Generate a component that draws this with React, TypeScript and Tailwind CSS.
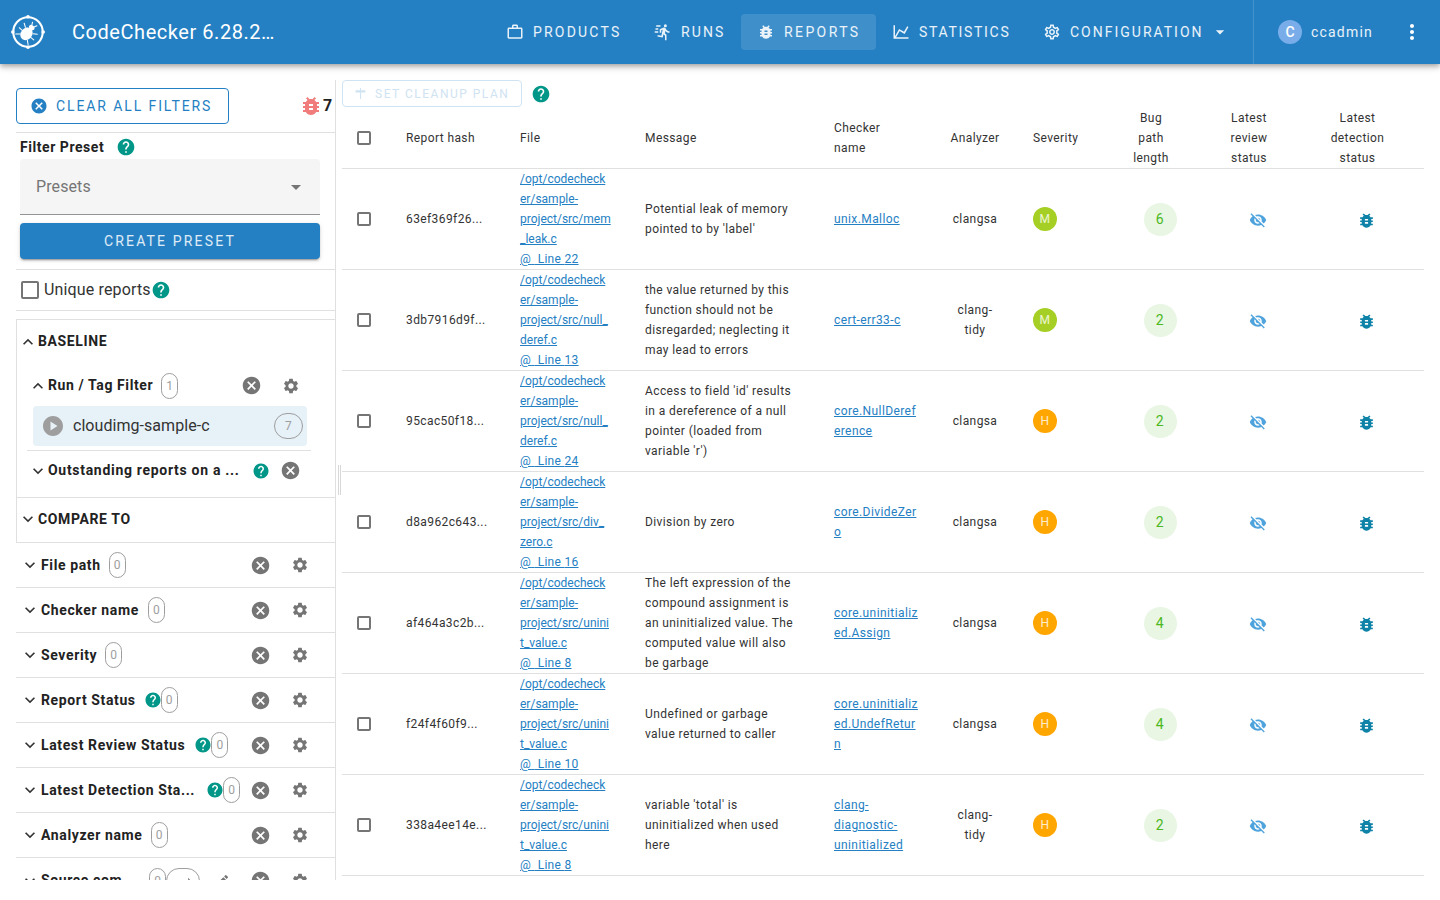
import React from 'react';
import {
  MdArrowDropDown,
  MdBugReport,
  MdCancel,
  MdEdit,
  MdExpandLess,
  MdExpandMore,
  MdHelp,
  MdMoreVert,
  MdOutlineSettings,
  MdPlayCircle,
  MdSettings,
  MdTrendingFlat,
  MdVisibilityOff,
} from 'react-icons/md';

const RUN_FAST =
  'M16.5,5.5A2,2 0 0,0 18.5,3.5A2,2 0 0,0 16.5,1.5A2,2 0 0,0 14.5,3.5A2,2 0 0,0 16.5,5.5M12.9,19.4L13.9,15L16,17V23H18V15.5L15.9,13.5L16.5,10.5C17.89,12.09 19.89,13 22,13V11C20.24,11.03 18.6,10.11 17.7,8.6L16.7,7C16.34,6.4 15.7,6 15,6C14.7,6 14.5,6.1 14.2,6.1L9,8.3V13H11V9.6L12.8,8.9L11.2,17L6.3,16L5.9,18L12.9,19.4M4,9A1,1 0 0,1 3,8A1,1 0 0,1 4,7H7V9H4M5,5A1,1 0 0,1 4,4A1,1 0 0,1 5,3H10V5H5M3,13A1,1 0 0,1 2,12A1,1 0 0,1 3,11H7V13H3Z';
const BRIEFCASE =
  'M20,6C20.58,6 21.05,6.2 21.42,6.59C21.8,7 22,7.45 22,8V19C22,19.55 21.8,20 21.42,20.41C21.05,20.8 20.58,21 20,21H4C3.42,21 2.95,20.8 2.58,20.41C2.2,20 2,19.55 2,19V8C2,7.45 2.2,7 2.58,6.59C2.95,6.2 3.42,6 4,6H8V4C8,3.42 8.2,2.95 8.58,2.58C8.95,2.2 9.42,2 10,2H14C14.58,2 15.05,2.2 15.42,2.58C15.8,2.95 16,3.42 16,4V6H20M4,8V19H20V8H4M14,6V4H10V6H14Z';
const CHART_LINE = 'M16,11.78L20.24,4.45L21.97,5.45L16.74,14.5L10.23,10.75L5.46,19H22V21H2V3H4V17.54L9.5,8L16,11.78Z';
const BUG =
  'M14,12H10V10H14M14,16H10V14H14M20,8H17.19C16.74,7.22 16.12,6.55 15.37,6.04L17,4.41L15.59,3L13.42,5.17C12.96,5.06 12.5,5 12,5C11.5,5 11.04,5.06 10.59,5.17L8.41,3L7,4.41L8.62,6.04C7.88,6.55 7.26,7.22 6.81,8H4V10H6.09C6.04,10.33 6,10.66 6,11V12H4V14H6V15C6,15.34 6.04,15.67 6.09,16H4V18H6.81C7.85,19.79 9.78,21 12,21C14.22,21 16.15,19.79 17.19,18H20V16H17.91C17.96,15.67 18,15.34 18,15V14H20V12H18V11C18,10.66 17.96,10.33 17.91,10H20V8Z';

function Mdi({ d, className }: { d: string; className?: string }) {
  return (
    <svg viewBox="0 0 24 24" className={className} fill="currentColor">
      <path d={d} />
    </svg>
  );
}

function Logo() {
  return (
    <svg viewBox="0 0 40 40" className="w-[38px] h-[38px]" fill="none">
      <circle cx="20" cy="20" r="15.5" stroke="white" strokeWidth="2.2" />
      <circle cx="20" cy="4" r="1.9" fill="white" />
      <circle cx="20" cy="36" r="1.9" fill="white" />
      <circle cx="4" cy="20" r="1.9" fill="white" />
      <circle cx="36" cy="20" r="1.9" fill="white" />
      {/* bug, head to the upper right */}
      <g transform="rotate(40 20 20)" stroke="white" strokeWidth="1.1" strokeLinecap="round">
        <ellipse cx="20" cy="22.5" rx="6" ry="7.2" fill="white" stroke="none" />
        <ellipse cx="20" cy="13.8" rx="3.2" ry="2.3" fill="white" stroke="none" />
        <path d="M18.5 12 L17 9 M21.5 12 L23 9" />
        <path d="M14.8 18 L11 15.5 M14.2 22.5 L10 22.5 M15 27 L11.5 30" />
        <path d="M25.2 18 L29 15.5 M25.8 22.5 L30 22.5 M25 27 L28.5 30" />
      </g>
    </svg>
  );
}

function NavButton({ label, icon, className, trailing }: { label: string; icon: React.ReactNode; className: string; trailing?: React.ReactNode }) {
  return (
    <div className={`h-9 shrink-0 flex items-center rounded text-[14px] text-white/90 ${className}`}>
      {icon}
      {label}
      {trailing}
    </div>
  );
}

function Header() {
  return (
    <header className="h-16 shrink-0 bg-[#2580c3] flex items-center text-white shadow-[0_2px_4px_-1px_rgba(0,0,0,0.2),0_4px_5px_0_rgba(0,0,0,0.14),0_1px_10px_0_rgba(0,0,0,0.12)] relative z-10">
      <div className="w-[491px] shrink-0 flex items-center pl-[9px]">
        <Logo />
        <span className="ml-[25px] text-[20px] tracking-[0.55px]">CodeChecker 6.28.2…</span>
      </div>
      <NavButton
        label="PRODUCTS"
        className="w-[146px] pl-[15px] tracking-[2.2px]"
        icon={<Mdi d={BRIEFCASE} className="w-[18px] h-[18px] mr-[9px]" />}
      />
      <NavButton
        label="RUNS"
        className="w-[104px] pl-4 tracking-[2.1px]"
        icon={<Mdi d={RUN_FAST} className="w-[18px] h-[18px] mr-[10px]" />}
      />
      <NavButton
        label="REPORTS"
        className="w-[135px] pl-4 tracking-[2.4px] bg-white/[0.12]"
        icon={<Mdi d={BUG} className="w-[18px] h-[18px] mr-[9px]" />}
      />
      <NavButton
        label="STATISTICS"
        className="w-[151px] pl-4 tracking-[1.7px]"
        icon={<Mdi d={CHART_LINE} className="w-[18px] h-[18px] mr-[9px]" />}
      />
      <NavButton
        label="CONFIGURATION"
        className="pl-4 tracking-[2px]"
        icon={<MdOutlineSettings size={18} className="mr-[9px]" />}
        trailing={<MdArrowDropDown size={20} className="ml-[6px]" />}
      />
      <div className="h-16 w-px bg-white/[0.14] ml-auto" />
      <div className="w-[186px] shrink-0 flex items-center pl-6 pr-[18px]">
        <div className="w-6 h-6 rounded-full bg-[#79ade9] flex items-center justify-center text-[14px] font-medium">C</div>
        <span className="ml-[9px] text-[14px] tracking-[1.2px] text-white/90">ccadmin</span>
        <MdMoreVert size={24} className="ml-auto mr-[-2px]" />
      </div>
    </header>
  );
}

function Help({ size = 20 }: { size?: number }) {
  return <MdHelp size={size} className="text-[#009688] shrink-0" />;
}

function Pill({ value }: { value: number }) {
  return (
    <span className="shrink-0 w-[17px] h-[26px] rounded-full border border-[#9e9e9e] flex items-center justify-center text-[12px] text-[#9e9e9e]">
      {value}
    </span>
  );
}

function RowActions({ className }: { className: string }) {
  return (
    <span className={`ml-auto flex items-center gap-5 shrink-0 ${className}`}>
      <MdCancel size={21} className="text-[#757575]" />
      <MdSettings size={18} className="text-[#757575]" />
    </span>
  );
}

function FilterRow({ label, count, help, gap = 8 }: { label: string; count: number; help?: boolean; gap?: number }) {
  return (
    <div className="h-[45px] border-b border-[#e0e0e0] flex items-center">
      <MdExpandMore size={20} className="ml-[4px] text-[#333] shrink-0" />
      <span className="ml-[1px] text-[14px] font-bold tracking-[0.62px] text-[#222] whitespace-nowrap">{label}</span>
      <span className="flex items-center" style={{ marginLeft: gap }}>
        {help && (
          <span className="mr-[-1px]">
            <Help size={18} />
          </span>
        )}
        <Pill value={count} />
      </span>
      <RowActions className="mr-[26px]" />
    </div>
  );
}

function Sidebar() {
  return (
    <aside className="w-[336px] shrink-0 mt-4 pt-2 pl-4 border-r border-[#e0e0e0] overflow-hidden">
      {/* clear filters */}
      <div className="h-[45px] flex items-start border-b border-[#e0e0e0]">
        <div className="w-[213px] h-9 rounded border border-[#2580c3] flex items-center pl-[13px] text-[#2580c3] text-[14px] tracking-[1.9px]">
          <MdCancel size={18} className="mr-[8px]" />
          CLEAR ALL FILTERS
        </div>
        <MdBugReport size={24} className="ml-[70px] mt-[6px] text-[#f07c7c]" />
        <span className="mt-[6px] text-[16px] font-bold text-[#222]">7</span>
      </div>

      {/* preset */}
      <div className="h-[137px] border-b border-[#e0e0e0] pl-1 pr-[15px]">
        <div className="flex items-center h-[26px] pt-[2px] text-[14px] font-bold tracking-[0.55px] text-[#222]">
          Filter Preset
          <span className="ml-3">
            <Help />
          </span>
        </div>
        <div className="h-14 bg-[#f5f5f5] rounded-t border-b border-[#949494] flex items-center justify-between pl-4 pr-3 text-[16px] tracking-[0.1px] text-[#757575]">
          Presets
          <MdArrowDropDown size={24} />
        </div>
        <div className="mt-2 h-9 bg-[#2580c3] rounded flex items-center justify-center text-white/85 text-[14px] tracking-[2.15px] shadow-[0_3px_1px_-2px_rgba(0,0,0,0.2),0_2px_2px_0_rgba(0,0,0,0.14),0_1px_5px_0_rgba(0,0,0,0.12)]">
          CREATE PRESET
        </div>
      </div>

      {/* unique */}
      <div className="h-[41px] border-b border-[#e0e0e0] flex items-center pl-[5px] text-[16px] tracking-[0.15px] text-[#333]">
        <span className="w-[18px] h-[18px] border-2 border-[#757575] rounded-[2px] mr-[5px]" />
        Unique reports
        <Help />
      </div>

      {/* baseline */}
      <div className="mt-2 border-t border-l border-[#e0e0e0]">
        <div className="h-[178px] border-b border-[#e0e0e0]">
          <div className="h-[43px] flex items-center pl-[1px] text-[14px] font-bold tracking-[0.62px] text-[#222]">
            <MdExpandLess size={20} className="text-[#333]" />
            BASELINE
          </div>
          <div className="h-[43px] pt-[2px] flex items-center pl-[11px]">
            <MdExpandLess size={20} className="text-[#333] shrink-0" />
            <span className="text-[14px] font-bold tracking-[0.6px] text-[#222]">Run / Tag Filter</span>
            <span className="ml-2">
              <Pill value={1} />
            </span>
            <RowActions className="mr-[35px]" />
          </div>
          <div className="ml-4 w-[274px] h-10 rounded bg-[#e7f1f8] flex items-center pl-2 pr-1 text-[16px] tracking-[0.05px] text-[#333]">
            <MdPlayCircle size={24} className="text-[#9e9e9e]" />
            <span className="ml-2">cloudimg-sample-c</span>
            <span className="ml-auto w-[29px] h-[26px] rounded-full border border-[#9e9e9e] flex items-center justify-center text-[12px] text-[#9e9e9e]">7</span>
          </div>
          <div className="ml-[10px] w-[284px] mt-1 border-t border-[#e0e0e0] h-10 flex items-center pl-[1px]">
            <MdExpandMore size={20} className="text-[#333] shrink-0" />
            <span className="text-[14px] font-bold tracking-[0.7px] text-[#222] whitespace-nowrap">Outstanding reports on a ...</span>
            <span className="ml-auto flex items-center gap-[10px] mr-[10px]">
              <Help size={18} />
              <MdCancel size={21} className="text-[#757575]" />
            </span>
          </div>
        </div>
        <div className="h-[45px] pb-[2px] flex items-center pl-[1px] border-b border-[#e0e0e0] text-[14px] font-bold tracking-[0.62px] text-[#222]">
          <MdExpandMore size={20} className="text-[#333]" />
          COMPARE TO
        </div>
      </div>

      {/* filters */}
      <FilterRow label="File path" count={0} />
      <FilterRow label="Checker name" count={0} gap={9} />
      <FilterRow label="Severity" count={0} />
      <FilterRow label="Report Status" count={0} help gap={8} />
      <FilterRow label="Latest Review Status" count={0} help gap={9} />
      <FilterRow label="Latest Detection Sta..." count={0} help gap={11} />
      <FilterRow label="Analyzer name" count={0} />
      <div className="h-[45px] flex items-center">
        <MdExpandMore size={20} className="ml-[4px] text-[#333] shrink-0" />
        <span className="ml-[1px] w-[108px] shrink-0 text-[14px] font-bold tracking-[0.62px] text-[#222] whitespace-nowrap overflow-hidden">Source com...</span>
        <Pill value={0} />
        <span className="w-[34px] h-[26px] rounded-full border border-[#9e9e9e] flex items-center justify-center text-[#8a8a8a]">
          <MdTrendingFlat size={20} />
        </span>
        <MdEdit size={16} className="ml-[14px] text-[#757575]" />
        <RowActions className="mr-[26px]" />
      </div>
    </aside>
  );
}

type Report = {
  hash: string;
  file: string[];
  line: number;
  message: string[];
  checker: string[];
  analyzer: string[];
  severity: 'M' | 'H';
  length: number;
};

const reports: Report[] = [
  {
    hash: '63ef369f26...',
    file: ['/opt/codecheck', 'er/sample-', 'project/src/mem', '_leak.c'],
    line: 22,
    message: ['Potential leak of memory', "pointed to by 'label'"],
    checker: ['unix.Malloc'],
    analyzer: ['clangsa'],
    severity: 'M',
    length: 6,
  },
  {
    hash: '3db7916d9f...',
    file: ['/opt/codecheck', 'er/sample-', 'project/src/null_', 'deref.c'],
    line: 13,
    message: ['the value returned by this', 'function should not be', 'disregarded; neglecting it', 'may lead to errors'],
    checker: ['cert-err33-c'],
    analyzer: ['clang-', 'tidy'],
    severity: 'M',
    length: 2,
  },
  {
    hash: '95cac50f18...',
    file: ['/opt/codecheck', 'er/sample-', 'project/src/null_', 'deref.c'],
    line: 24,
    message: ["Access to field 'id' results", 'in a dereference of a null', 'pointer (loaded from', "variable 'r')"],
    checker: ['core.NullDeref', 'erence'],
    analyzer: ['clangsa'],
    severity: 'H',
    length: 2,
  },
  {
    hash: 'd8a962c643...',
    file: ['/opt/codecheck', 'er/sample-', 'project/src/div_', 'zero.c'],
    line: 16,
    message: ['Division by zero'],
    checker: ['core.DivideZer', 'o'],
    analyzer: ['clangsa'],
    severity: 'H',
    length: 2,
  },
  {
    hash: 'af464a3c2b...',
    file: ['/opt/codecheck', 'er/sample-', 'project/src/unini', 't_value.c'],
    line: 8,
    message: ['The left expression of the', 'compound assignment is', 'an uninitialized value. The', 'computed value will also', 'be garbage'],
    checker: ['core.uninitializ', 'ed.Assign'],
    analyzer: ['clangsa'],
    severity: 'H',
    length: 4,
  },
  {
    hash: 'f24f4f60f9...',
    file: ['/opt/codecheck', 'er/sample-', 'project/src/unini', 't_value.c'],
    line: 10,
    message: ['Undefined or garbage', 'value returned to caller'],
    checker: ['core.uninitializ', 'ed.UndefRetur', 'n'],
    analyzer: ['clangsa'],
    severity: 'H',
    length: 4,
  },
  {
    hash: '338a4ee14e...',
    file: ['/opt/codecheck', 'er/sample-', 'project/src/unini', 't_value.c'],
    line: 8,
    message: ["variable 'total' is", 'uninitialized when used', 'here'],
    checker: ['clang-', 'diagnostic-', 'uninitialized'],
    analyzer: ['clang-', 'tidy'],
    severity: 'H',
    length: 2,
  },
];

function Lines({ lines }: { lines: string[] }) {
  return (
    <>
      {lines.map((l) => (
        <div key={l}>{l}</div>
      ))}
    </>
  );
}

function TableCheckbox() {
  return <span className="block w-[14px] h-[14px] border-2 border-[#757575] rounded-[2px] ml-[15px]" />;
}

function ReportsTable() {
  return (
    <table className="w-[1082px] table-fixed border-collapse text-[12px] leading-5 tracking-[0.4px] text-[#333]">
      <colgroup>
        <col className="w-[48px]" />
        <col className="w-[114px]" />
        <col className="w-[125px]" />
        <col className="w-[189px]" />
        <col className="w-[116px]" />
        <col className="w-[82px]" />
        <col className="w-[79px]" />
        <col className="w-[112px]" />
        <col className="w-[84px]" />
        <col className="w-[133px]" />
      </colgroup>
      <thead>
        <tr className="h-[60px] border-b border-[#e0e0e0] font-normal">
          <th className="p-0">
            <TableCheckbox />
          </th>
          <th className="pl-4 text-left font-normal">Report hash</th>
          <th className="pl-4 text-left font-normal">File</th>
          <th className="pl-4 text-left font-normal">Message</th>
          <th className="pl-4 text-left font-normal">Checker<br />name</th>
          <th className="text-center font-normal">Analyzer</th>
          <th className="pl-[17px] text-left font-normal">Severity</th>
          <th className="text-center font-normal">Bug<br />path<br />length</th>
          <th className="text-center font-normal">Latest<br />review<br />status</th>
          <th className="text-center font-normal">Latest<br />detection<br />status</th>
        </tr>
      </thead>
      <tbody>
        {reports.map((r) => (
          <tr key={r.hash} className="h-[101px] border-b border-[#e0e0e0]">
            <td className="p-0">
              <TableCheckbox />
            </td>
            <td className="pl-4">{r.hash}</td>
            <td className="pl-4 text-[#2580c3] underline whitespace-nowrap tracking-normal">
              <Lines lines={r.file} />
              <div className="tracking-[0.3px]">@{'\u00a0'} Line {r.line}</div>
            </td>
            <td className="pl-4 whitespace-nowrap">
              <Lines lines={r.message} />
            </td>
            <td className="pl-4 text-[#2580c3] underline whitespace-nowrap">
              <Lines lines={r.checker} />
            </td>
            <td className="text-center">
              <Lines lines={r.analyzer} />
            </td>
            <td className="pl-[17px]">
              <span className={`w-6 h-6 rounded-full flex items-center justify-center text-white/80 ${r.severity === 'M' ? 'bg-[#a5cf24]' : 'bg-[#ffa600]'}`}>
                {r.severity}
              </span>
            </td>
            <td className="pl-[18px]">
              <span className="mx-auto w-[33px] h-[33px] rounded-full bg-[#e8f6e3] text-[#4cb81e] text-[14px] flex items-center justify-center">
                {r.length}
              </span>
            </td>
            <td className="pl-[18px]">
              <MdVisibilityOff size={18} className="mx-auto mt-[2px] text-[#4fa3dd]" />
            </td>
            <td className="pl-[18px]">
              <MdBugReport size={19} className="mx-auto mt-[2px] text-[#0f82a8]" />
            </td>
          </tr>
        ))}
      </tbody>
    </table>
  );
}

function ReportsPane() {
  return (
    <section className="flex-1 pt-4 pl-[6px] overflow-hidden">
      <div className="h-[28px] flex items-start">
        <div className="w-[180px] h-[27px] rounded border border-[#cfe3f2] flex items-center pl-[11px] text-[#cfe3f2] text-[12px] tracking-[1.5px]">
          <svg viewBox="0 0 24 24" className="w-[13px] h-[13px] mr-[8px]" fill="currentColor">
            <path d="M11 2h2v4h8v4h-8v12h-2V10H3V6h8z" />
          </svg>
          SET CLEANUP PLAN
        </div>
        <span className="ml-[9px] mt-1">
          <Help />
        </span>
      </div>
      <ReportsTable />
    </section>
  );
}

export default function App() {
  return (
    <div className="h-[880px] bg-white flex flex-col overflow-hidden font-[Roboto,sans-serif]">
      <Header />
      <main className="flex-1 flex min-h-0 relative">
        <Sidebar />
        <ReportsPane />
        {/* resize handle */}
        <div className="absolute left-[338px] top-[401px] w-[3px] h-[30px] border-x border-[#d8d8d8]" />
      </main>
    </div>
  );
}
